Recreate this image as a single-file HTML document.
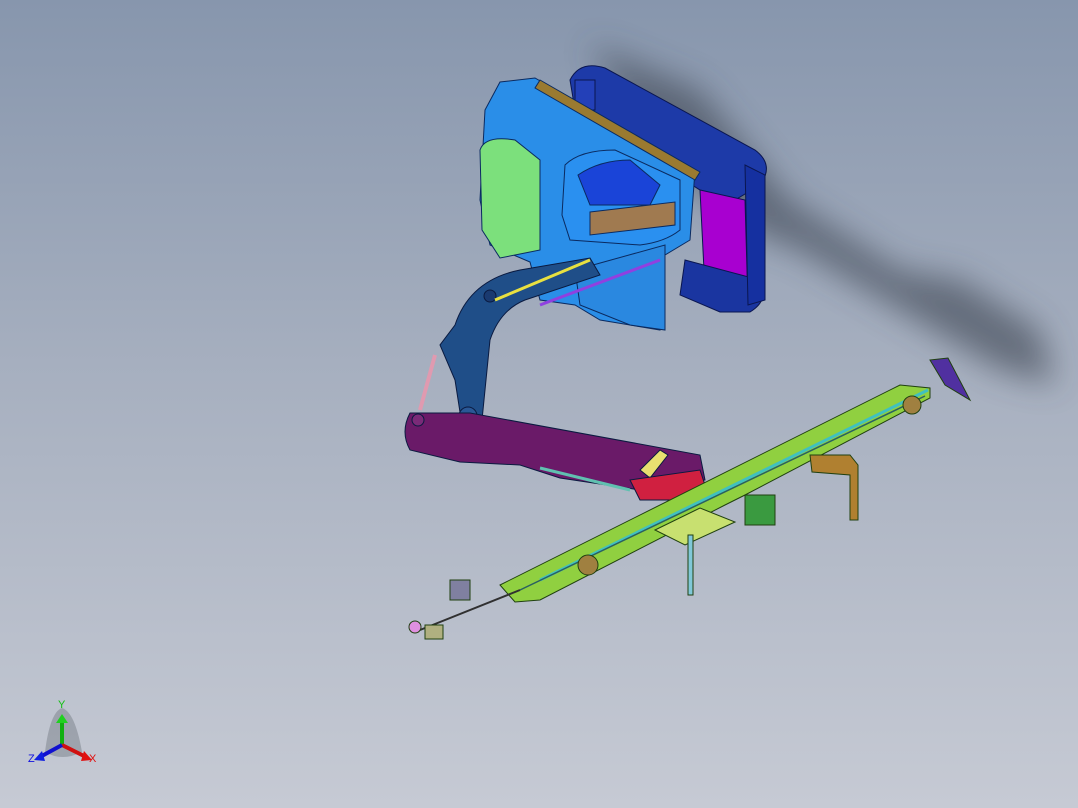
<!DOCTYPE html>
<html><head><meta charset="utf-8"><style>
html,body{margin:0;padding:0}
body{width:1078px;height:808px;overflow:hidden;background:linear-gradient(180deg,#8796ad 0%,#a6afbf 45%,#c6cad4 100%)}
svg{position:absolute;left:0;top:0}
</style></head><body>
<svg width="1078" height="808" viewBox="0 0 1078 808">
<defs>
<filter id="b" x="-50%" y="-50%" width="200%" height="200%"><feGaussianBlur stdDeviation="16"/></filter>
</defs>
<g filter="url(#b)" opacity=".6">
<polygon points="590,45 700,90 790,200 900,270 960,280 1040,330 1055,385 1000,370 900,310 800,250 760,235 660,160" fill="#3a4250"/>
</g>
<g stroke="#0a1650" stroke-width="1">
<path d="M570,80 Q580,60 605,68 L755,150 Q775,165 760,185 L735,200 L700,190 L575,110 Z" fill="#1d3aa8"/>
<rect x="575" y="80" width="20" height="30" fill="#2340b8"/>
<polygon points="700,190 745,200 748,305 705,290" fill="#a800d0"/>
<path d="M685,260 L760,280 Q770,300 750,312 L720,312 L680,295 Z" fill="#1a35a0"/>
<polygon points="745,165 765,175 765,300 748,305" fill="#1530a0"/>
</g>
<g stroke="#0a2a60" stroke-width="1">
<polygon points="485,110 500,82 535,78 695,170 690,240 665,255 660,330 600,320 575,305 540,300 530,262 490,245 480,200" fill="#2a8ee8"/>
<polygon points="540,80 700,172 695,180 535,88" fill="#9a7a30"/>
<path d="M480,150 Q485,135 515,140 L540,160 L540,250 L500,258 L482,230 Z" fill="#7ce07c"/>
<path d="M565,165 Q580,150 615,150 L680,180 L680,230 Q665,242 640,245 L570,240 L562,215 Z" fill="#2a90f0"/>
<path d="M578,175 Q600,160 630,160 L660,185 L650,205 L590,205 Z" fill="#1a44d8"/>
<polygon points="590,212 675,202 675,225 590,235" fill="#a07a50"/>
<polygon points="575,270 665,245 665,330 630,325 580,305" fill="#2a88e0"/>
</g>
<g stroke="#0a1a40" stroke-width="1">
<path d="M455,325 Q470,280 520,270 L590,258 L600,275 L525,300 Q500,310 490,340 L482,420 L462,425 L455,380 L440,345 Z" fill="#1f4e88"/>
<circle cx="490" cy="296" r="6" fill="#1a3a70"/>
<circle cx="468" cy="416" r="9" fill="#2a5896"/>
<line x1="495" y1="300" x2="590" y2="260" stroke="#e8e040" stroke-width="3"/>
<line x1="540" y1="305" x2="660" y2="260" stroke="#9040e0" stroke-width="3"/>
<line x1="435" y1="355" x2="420" y2="410" stroke="#e09ab0" stroke-width="4"/>
<path d="M410,413 L470,413 L700,455 L705,480 L640,490 L560,478 L520,465 L460,462 L410,450 Q400,432 410,413 Z" fill="#6a1a68"/>
<circle cx="418" cy="420" r="6" fill="#7a2a78"/>
<line x1="540" y1="468" x2="630" y2="490" stroke="#60c0b0" stroke-width="3"/>
<polygon points="640,470 660,450 668,455 650,478" fill="#e8e070"/>
<polygon points="630,480 700,470 710,500 640,500" fill="#d02040"/>
</g>
<g stroke="#204010" stroke-width="1">
<polygon points="500,585 900,385 930,388 930,398 745,495 725,505 540,600 515,602" fill="#90d040"/>
<line x1="540" y1="580" x2="928" y2="390" stroke="#40c0c0" stroke-width="3"/>
<line x1="520" y1="590" x2="925" y2="396" stroke="#2a6060" stroke-width="1.5"/>
<polygon points="655,530 700,508 735,522 685,545" fill="#c8e070"/>
<rect x="688" y="535" width="5" height="60" fill="#80c8d8"/>
<polygon points="810,455 850,455 858,465 858,520 850,520 850,475 812,472" fill="#b08030"/>
<rect x="745" y="495" width="30" height="30" fill="#3a9a40"/>
<circle cx="588" cy="565" r="10" fill="#a08040"/>
<circle cx="912" cy="405" r="9" fill="#a08040"/>
<polygon points="930,360 948,358 970,400 945,385" fill="#5030a0"/>
<line x1="420" y1="630" x2="520" y2="590" stroke="#303030" stroke-width="2"/>
<rect x="450" y="580" width="20" height="20" fill="#8080a0"/>
<circle cx="415" cy="627" r="6" fill="#e090e0"/>
<rect x="425" y="625" width="18" height="14" fill="#b0b080"/>
</g>
<g>
<path d="M45,752 Q50,712 62,708 Q75,712 82,752 Q62,762 45,752Z" fill="#707880" opacity=".45"/>
<line x1="62" y1="745" x2="62" y2="722" stroke="#10b010" stroke-width="4"/>
<polygon points="56,723 62,714 68,723" fill="#20d020"/>
<line x1="62" y1="745" x2="86" y2="757" stroke="#d01010" stroke-width="4"/>
<polygon points="84,751 92,760 81,761" fill="#e01010"/>
<line x1="62" y1="745" x2="40" y2="757" stroke="#1010d0" stroke-width="4"/>
<polygon points="42,751 34,760 45,761" fill="#1020e0"/>
<text x="58" y="708" font-family="Liberation Sans,sans-serif" font-size="11" fill="#10c010">Y</text>
<text x="89" y="762" font-family="Liberation Sans,sans-serif" font-size="11" fill="#e01010">X</text>
<text x="28" y="762" font-family="Liberation Sans,sans-serif" font-size="11" fill="#1010e0">Z</text>
</g>
</svg>
</body></html>
